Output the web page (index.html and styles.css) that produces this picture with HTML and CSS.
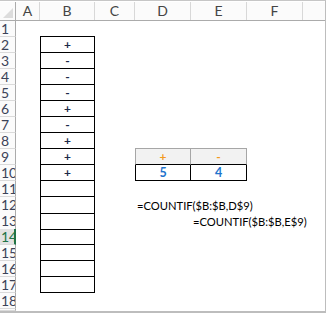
FILE: index.html
```html
<!DOCTYPE html>
<html>
<head>
<meta charset="utf-8">
<link rel="stylesheet" href="styles.css">
</head>
<body>
<div class="sheet">
  <div class="hdr">
    <div class="corner"><svg width="10" height="10" viewBox="0 0 10 10"><polygon points="10,0 10,10 0,10" fill="#dcdcdc"/></svg></div>
    <div class="ch">A</div><div class="ch">B</div><div class="ch">C</div><div class="ch">D</div><div class="ch">E</div><div class="ch">F</div><div class="ch end"></div>
  </div>
  <div class="row"><div class="rh">1</div><div class="c"></div><div class="c bt"></div><div class="c"></div><div class="c"></div><div class="c"></div><div class="c"></div><div class="c"></div></div>
  <div class="row"><div class="rh">2</div><div class="c"></div><div class="c box">+</div><div class="c"></div><div class="c"></div><div class="c"></div><div class="c"></div><div class="c"></div></div>
  <div class="row"><div class="rh">3</div><div class="c"></div><div class="c box">-</div><div class="c"></div><div class="c"></div><div class="c"></div><div class="c"></div><div class="c"></div></div>
  <div class="row"><div class="rh">4</div><div class="c"></div><div class="c box">-</div><div class="c"></div><div class="c"></div><div class="c"></div><div class="c"></div><div class="c"></div></div>
  <div class="row"><div class="rh">5</div><div class="c"></div><div class="c box">-</div><div class="c"></div><div class="c"></div><div class="c"></div><div class="c"></div><div class="c"></div></div>
  <div class="row"><div class="rh">6</div><div class="c"></div><div class="c box">+</div><div class="c"></div><div class="c"></div><div class="c"></div><div class="c"></div><div class="c"></div></div>
  <div class="row"><div class="rh">7</div><div class="c"></div><div class="c box">-</div><div class="c"></div><div class="c"></div><div class="c"></div><div class="c"></div><div class="c"></div></div>
  <div class="row"><div class="rh">8</div><div class="c"></div><div class="c box">+</div><div class="c"></div><div class="c tg"></div><div class="c tg"></div><div class="c"></div><div class="c"></div></div>
  <div class="row"><div class="rh">9</div><div class="c"></div><div class="c box">+</div><div class="c"></div><div class="c th first">+</div><div class="c th">-</div><div class="c"></div><div class="c"></div></div>
  <div class="row"><div class="rh">10</div><div class="c"></div><div class="c box">+</div><div class="c"></div><div class="c td first">5</div><div class="c td">4</div><div class="c"></div><div class="c"></div></div>
  <div class="row"><div class="rh">11</div><div class="c"></div><div class="c box"></div><div class="c"></div><div class="c"></div><div class="c"></div><div class="c"></div><div class="c"></div></div>
  <div class="row"><div class="rh">12</div><div class="c"></div><div class="c box"></div><div class="c"></div><div class="c f">=COUNTIF($B:$B,D$9)</div><div class="c"></div><div class="c"></div><div class="c"></div></div>
  <div class="row"><div class="rh">13</div><div class="c"></div><div class="c box"></div><div class="c"></div><div class="c"></div><div class="c f">=COUNTIF($B:$B,E$9)</div><div class="c"></div><div class="c"></div></div>
  <div class="row"><div class="rh sel">14</div><div class="c"></div><div class="c box"></div><div class="c"></div><div class="c"></div><div class="c"></div><div class="c"></div><div class="c"></div></div>
  <div class="row"><div class="rh">15</div><div class="c"></div><div class="c box"></div><div class="c"></div><div class="c"></div><div class="c"></div><div class="c"></div><div class="c"></div></div>
  <div class="row"><div class="rh">16</div><div class="c"></div><div class="c box"></div><div class="c"></div><div class="c"></div><div class="c"></div><div class="c"></div><div class="c"></div></div>
  <div class="row"><div class="rh">17</div><div class="c"></div><div class="c box"></div><div class="c"></div><div class="c"></div><div class="c"></div><div class="c"></div><div class="c"></div></div>
  <div class="row"><div class="rh">18</div><div class="c"></div><div class="c"></div><div class="c"></div><div class="c"></div><div class="c"></div><div class="c"></div><div class="c"></div></div>
  <div class="row part"><div class="rh"></div><div class="c"></div><div class="c"></div><div class="c"></div><div class="c"></div><div class="c"></div><div class="c"></div><div class="c"></div></div>
</div>
</body>
</html>
```
FILE: styles.css
```css
html, body {
  margin: 0;
  padding: 0;
  background: #ffffff;
}
.sheet {
  width: 326px;
  height: 313px;
  box-sizing: border-box;
  border-top: 1px solid #c6c6c6;
  padding-top: 1px;
  border-right: 1px solid #bdbdbd;
  border-bottom: 2px solid #bdbdbd;
  display: flex;
  flex-direction: column;
  overflow: hidden;
  font-family: Lato, "Liberation Sans", sans-serif;
}
.hdr, .row {
  display: grid;
  grid-template-columns: 16px 24px 55px 40px 56px 56px 56px 1fr;
  flex: none;
}
.hdr {
  height: 19px;
  border-bottom: 1px solid #ababab;
  box-sizing: border-box;
  background: #fbfbfb;
}
.corner {
  border-right: 1px solid #ababab;
  display: flex;
  align-items: flex-end;
  justify-content: flex-end;
  padding: 0 2px 2px 0;
}
.corner svg { display: block; }
.ch {
  border-right: 1px solid #d8d8d8;
  font-size: 14px;
  line-height: 18px;
  text-align: center;
  color: #444;
}
.ch.end { border-right: none; }
.row {
  height: 16px;
}
.row.part { height: 2px; overflow: hidden; }
.rh {
  box-sizing: border-box;
  border-right: 1px solid #ababab;
  border-bottom: 1px solid #dadada;
  background: #fbfbfb;
  font-size: 14px;
  line-height: 16px;
  padding-left: 1px;
  color: #3b4358;
  overflow: hidden;
  white-space: nowrap;
}
.rh.sel {
  background: #e2e2e2;
  color: #217346;
  border-right: 2px solid #217346;
}
.c {
  box-sizing: border-box;
  font-size: 12px;
  line-height: 16px;
  white-space: nowrap;
}
.bt { border-bottom: 1px solid #000; }
.box {
  border-left: 1px solid #000;
  border-right: 1px solid #000;
  border-bottom: 1px solid #000;
  text-align: center;
  font-weight: bold;
  color: #1c2a48;
  line-height: 15px;
}
.tg { border-bottom: 1px solid #a6a6a6; }
.th {
  background: #f2f2f2;
  border-right: 1px solid #a6a6a6;
  border-bottom: 1px solid #000;
  color: #f39a1e;
  text-align: center;
  font-weight: bold;
  line-height: 15px;
}
.th.first { border-left: 1px solid #a6a6a6; }
.td {
  border-right: 1px solid #000;
  border-bottom: 1px solid #000;
  color: #1f74cc;
  text-align: center;
  font-size: 12.5px;
  font-weight: bold;
  line-height: 15px;
}
.td.first { border-left: 1px solid #000; }
.f {
  padding-left: 2px;
  color: #000;
  font-size: 11.2px;
  overflow: visible;
  line-height: 17px;
}
```
